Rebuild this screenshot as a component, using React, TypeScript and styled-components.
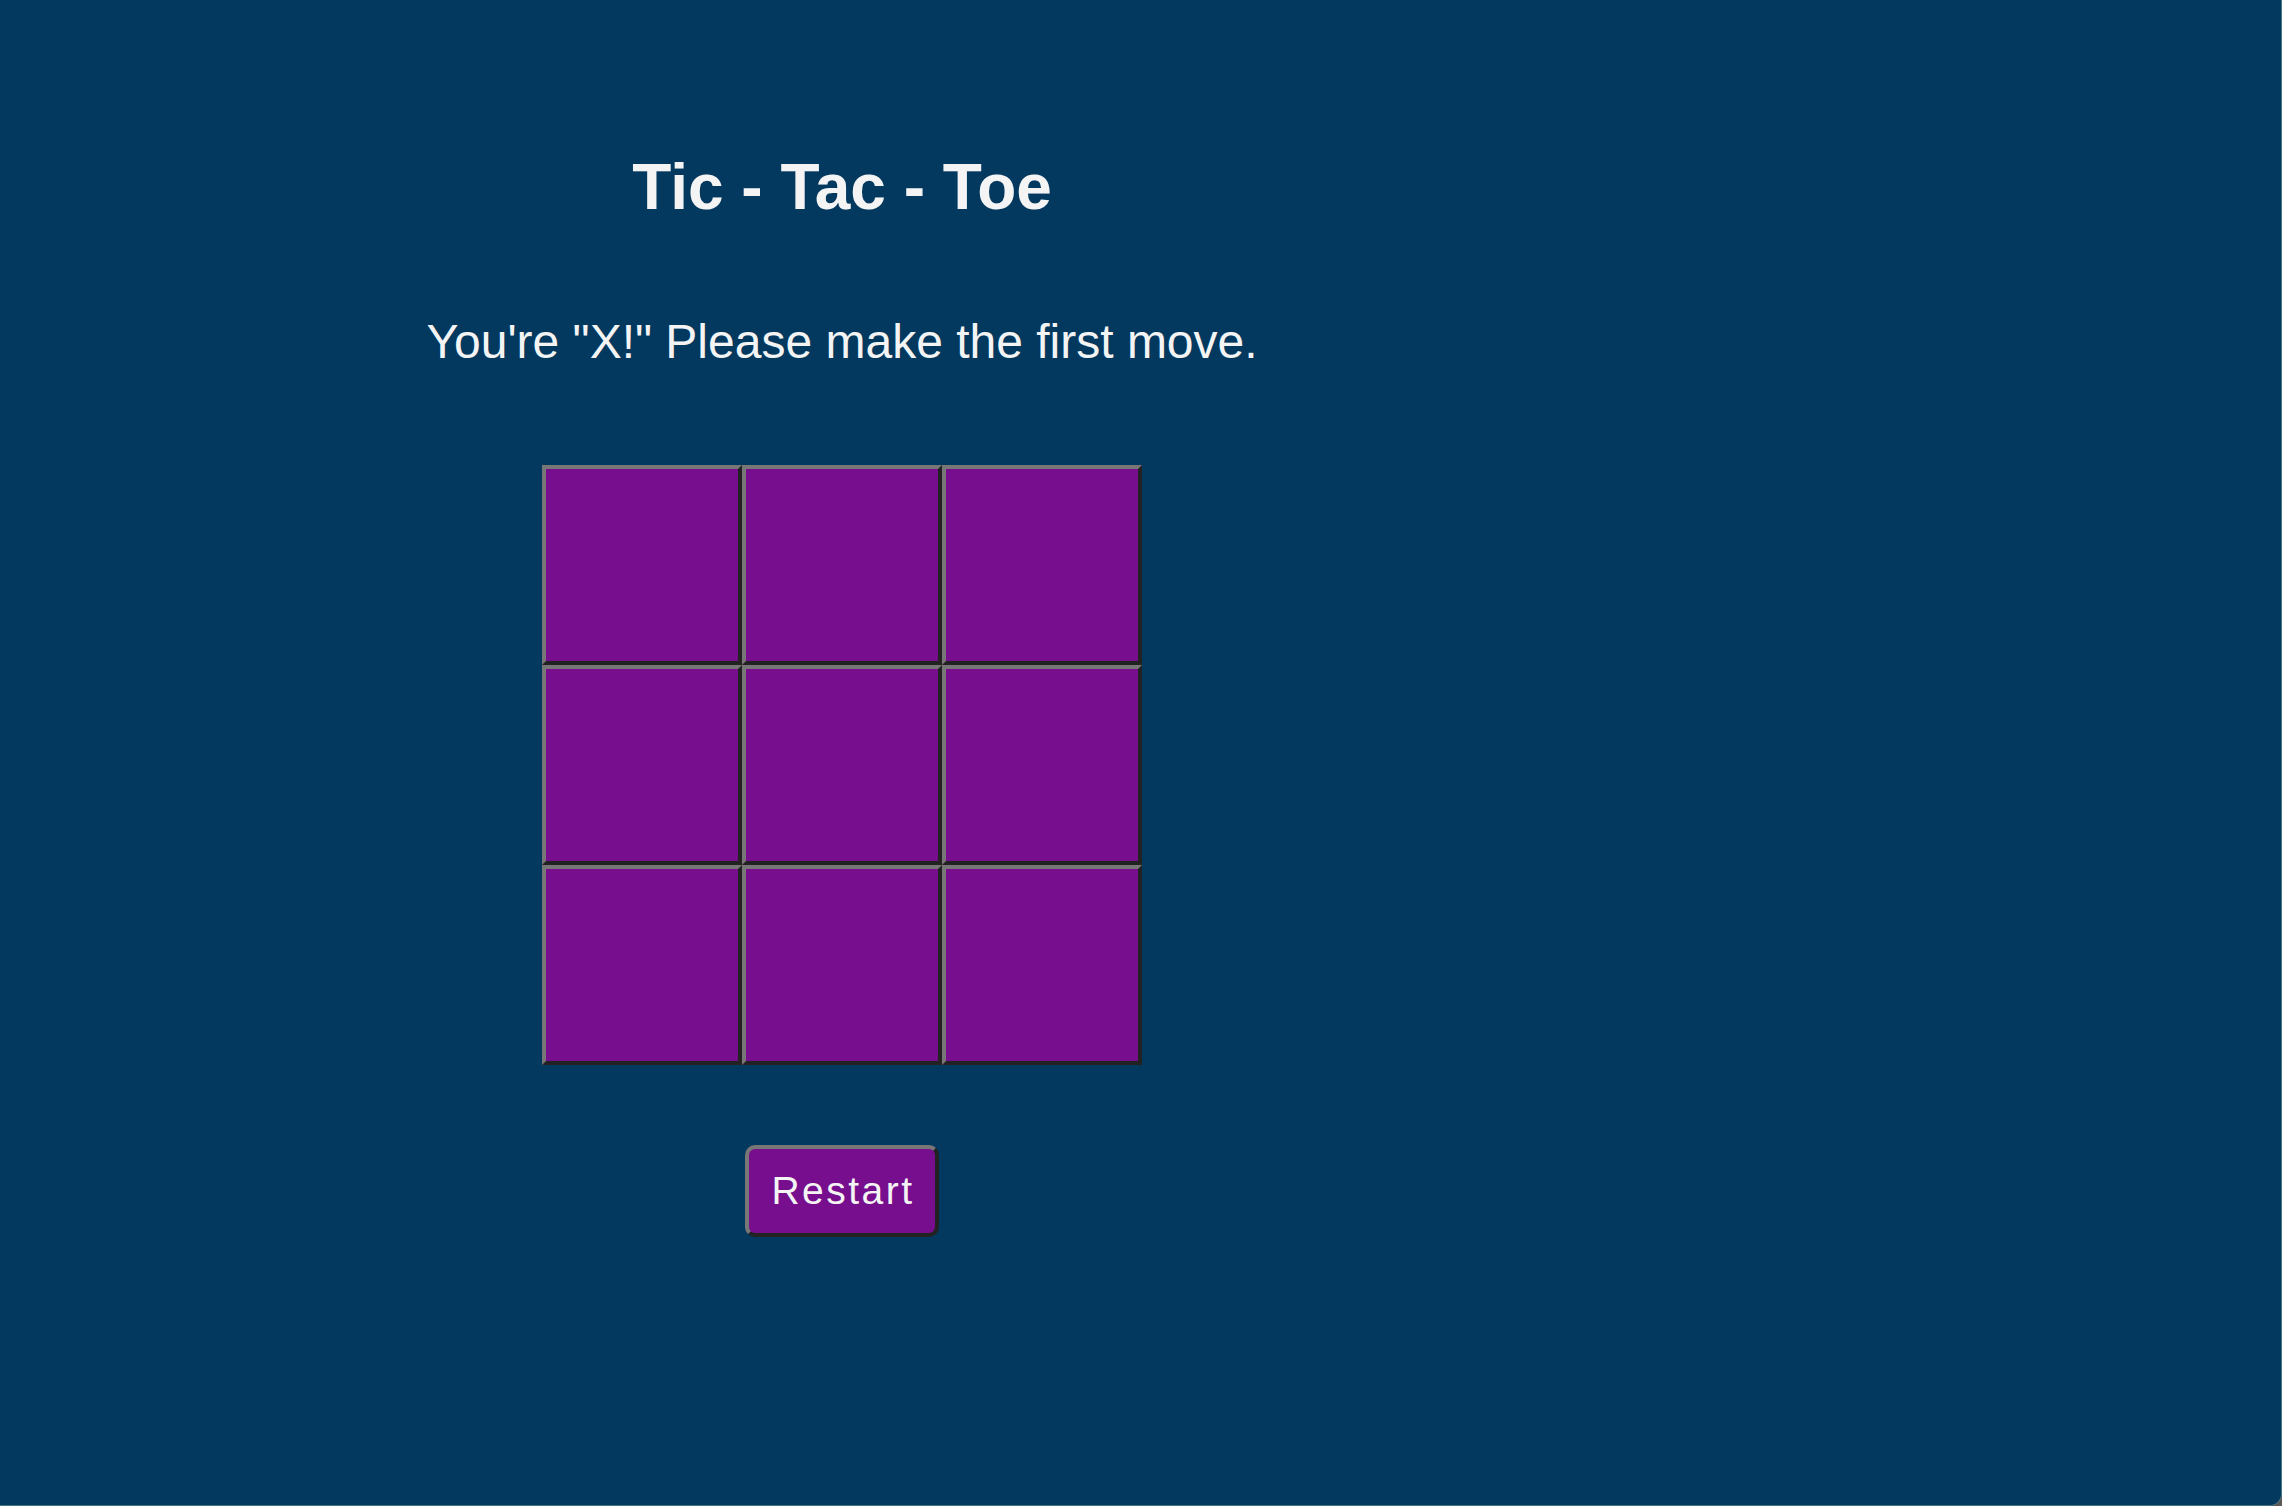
import React, { useState } from "react";
import styled, { createGlobalStyle } from "styled-components";

const GlobalStyle = createGlobalStyle`
  html, body {
    margin: 0;
    padding: 0;
    background: #5c5850;
  }
  * { box-sizing: border-box; }
`;

const Page = styled.div`
  width: 2282px;
  height: 1506px;
  background: #03385f;
  border-right: 1px solid #4a7585;
  border-bottom: 1px solid #4a7585;
  border-bottom-right-radius: 12px;
  font-family: "Liberation Sans", Arial, sans-serif;
  color: #f4f4f4;
  display: flex;
`;

const Column = styled.main`
  width: 1684px;
  padding-top: 155px;
  display: flex;
  flex-direction: column;
  align-items: center;
`;

const Title = styled.h1`
  margin: 0;
  font-size: 64px;
  line-height: 64px;
  font-weight: 700;
`;

const Status = styled.p`
  margin: 99px 0 0;
  font-size: 48px;
  line-height: 48px;
  font-weight: 400;
`;

const Board = styled.div`
  margin-top: 99px;
  display: grid;
  grid-template-columns: repeat(3, 200px);
  grid-template-rows: repeat(3, 200px);
`;

const Cell = styled.button`
  width: 200px;
  height: 200px;
  padding: 0;
  margin: 0;
  background: #770e8d;
  border: 4px solid;
  border-color: #777777 #222222 #222222 #777777;
  color: #f4f4f4;
  font-family: inherit;
  font-size: 120px;
  font-weight: 700;
  cursor: pointer;
`;

const RestartButton = styled.button`
  margin-top: 80px;
  width: 194px;
  height: 92px;
  background: #770e8d;
  border: 4px solid;
  border-color: #777777 #222222 #222222 #777777;
  border-radius: 10px;
  color: #f4f4f4;
  font-family: "Liberation Sans", Arial, sans-serif;
  font-size: 39px;
  letter-spacing: 2.5px;
  padding: 0 0 0 2px;
  cursor: pointer;
`;

export default function App() {
  const [cells, setCells] = useState<string[]>(Array(9).fill(""));
  const [turn, setTurn] = useState<"X" | "O">("X");

  const play = (i: number) => {
    if (cells[i]) return;
    const next = cells.slice();
    next[i] = turn;
    setCells(next);
    setTurn(turn === "X" ? "O" : "X");
  };

  return (
    <>
      <GlobalStyle />
      <Page>
        <Column>
          <Title>Tic - Tac - Toe</Title>
          <Status>You're "X!" Please make the first move.</Status>
          <Board>
            {cells.map((c, i) => (
              <Cell key={i} onClick={() => play(i)}>
                {c}
              </Cell>
            ))}
          </Board>
          <RestartButton
            onClick={() => {
              setCells(Array(9).fill(""));
              setTurn("X");
            }}
          >
            Restart
          </RestartButton>
        </Column>
      </Page>
    </>
  );
}
